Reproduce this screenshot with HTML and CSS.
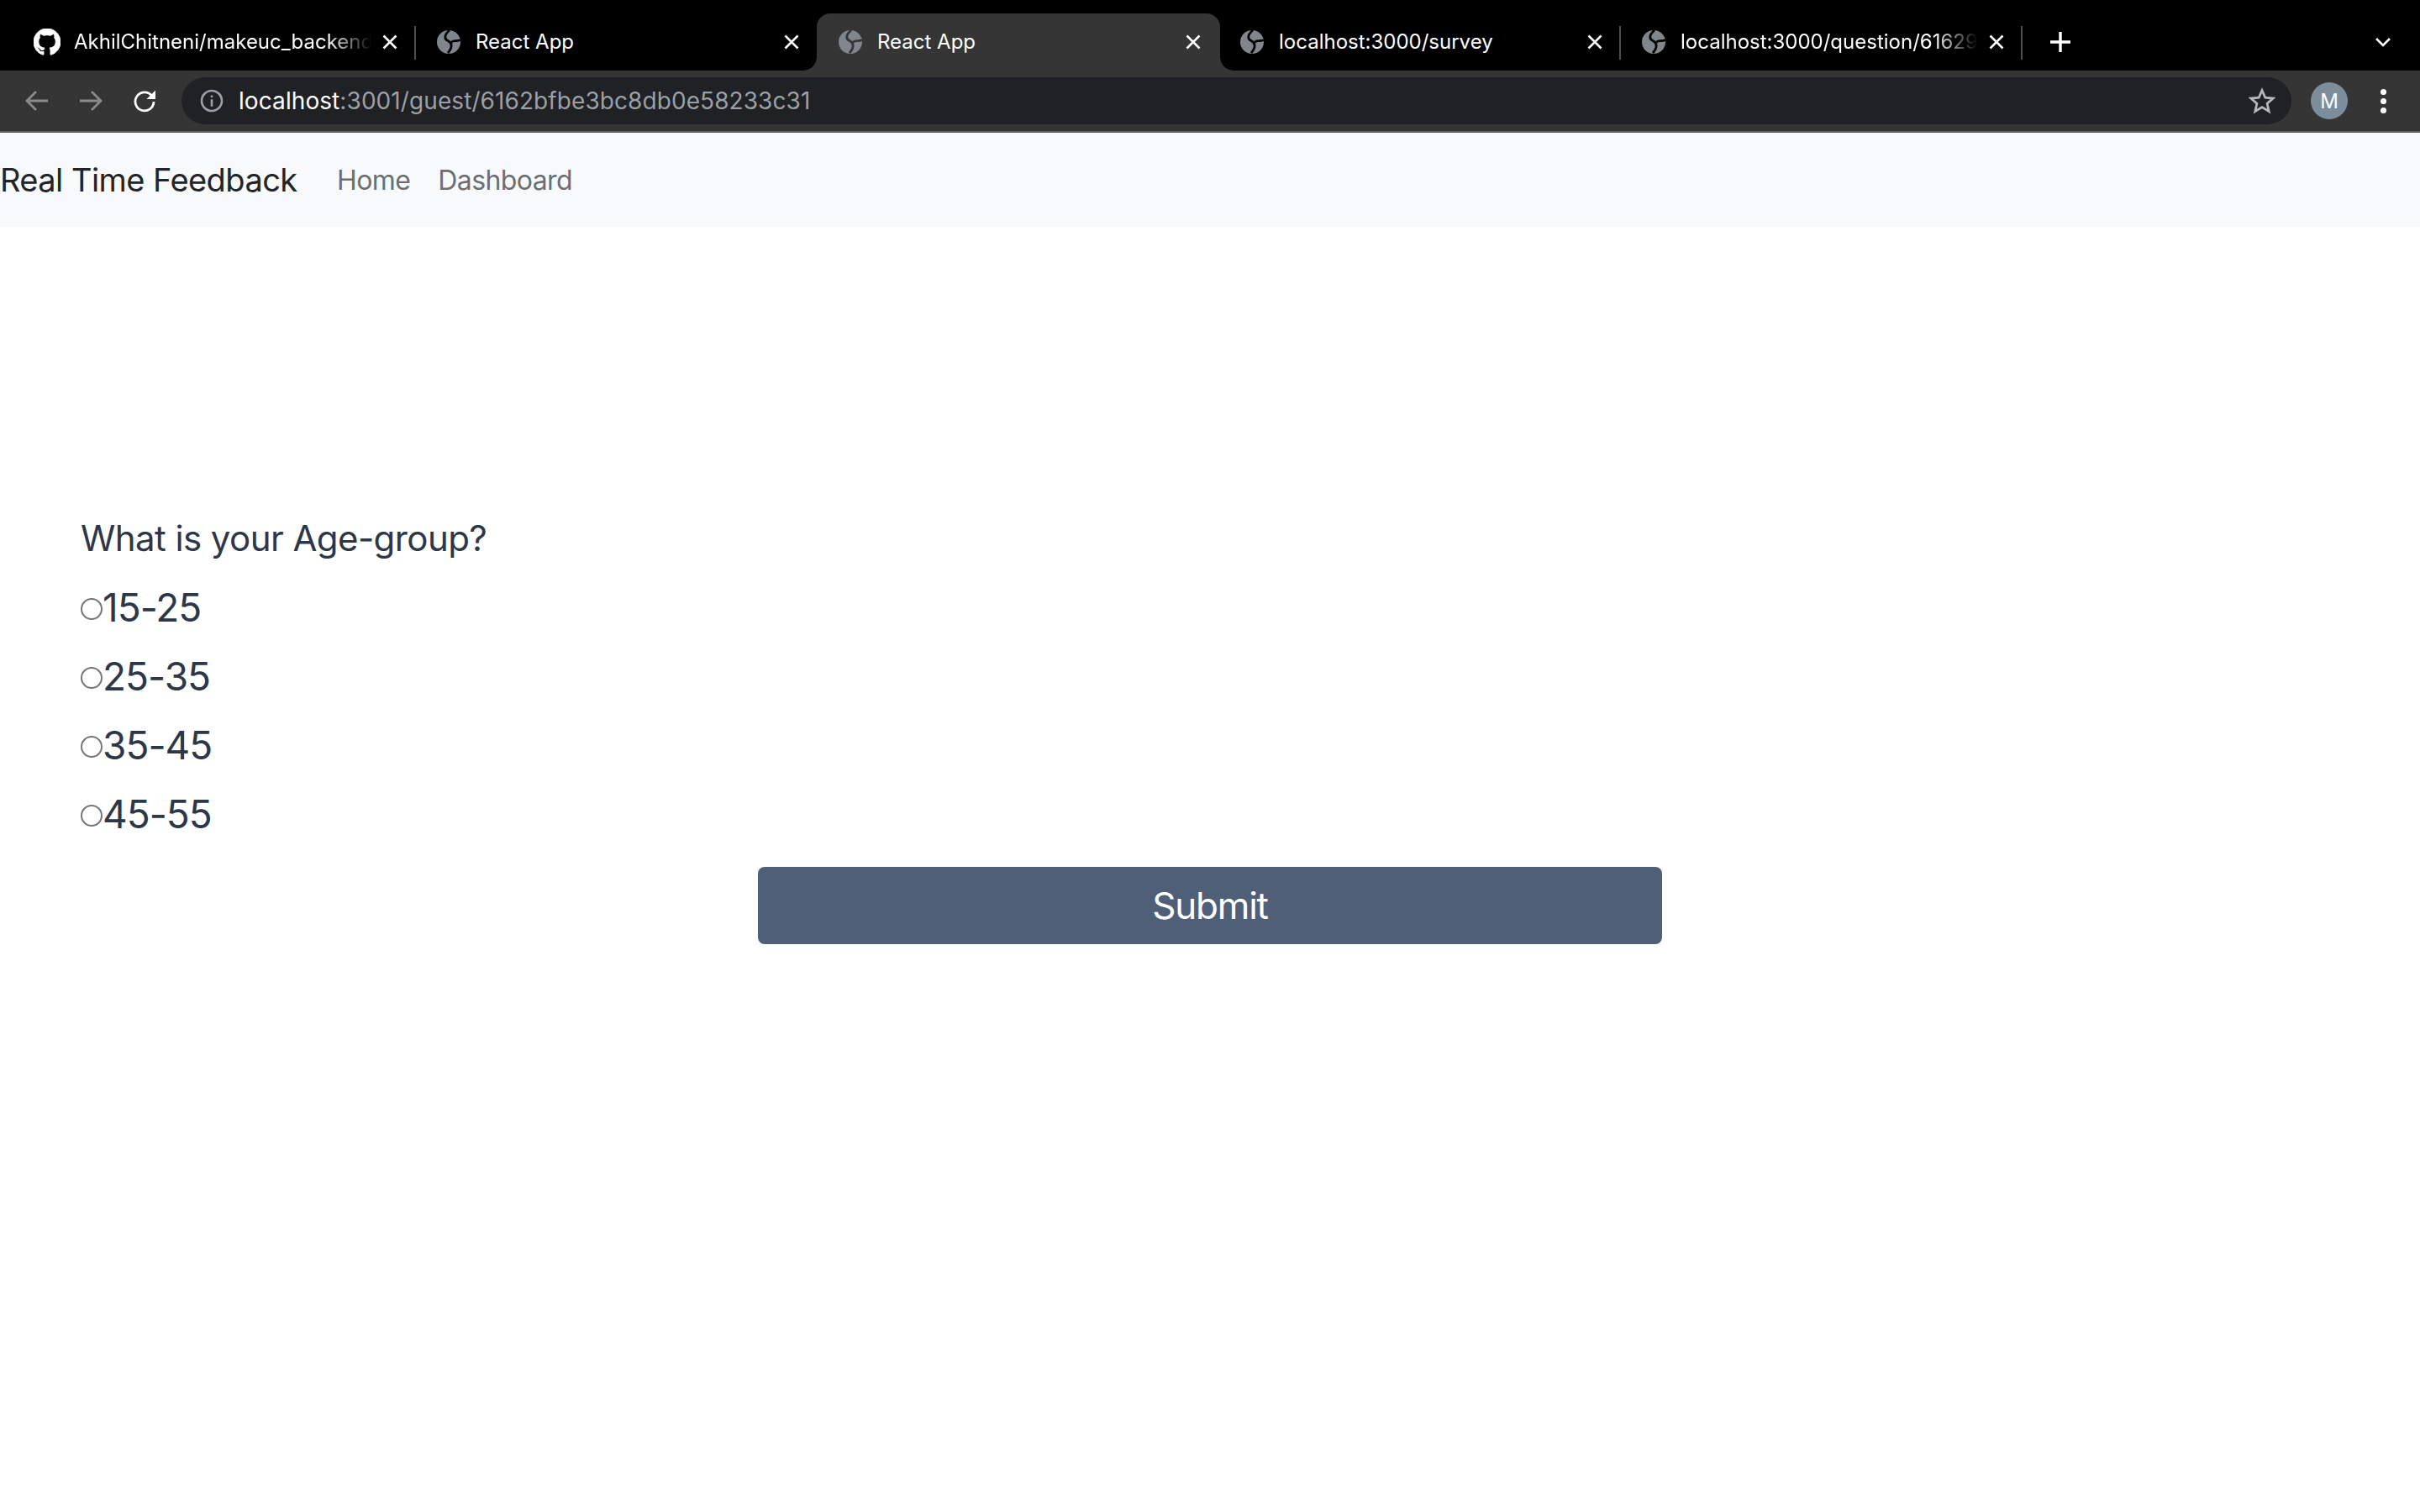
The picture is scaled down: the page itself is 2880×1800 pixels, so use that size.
FILE: index.html
```html
<!DOCTYPE html>
<html>
<head>
    <meta charset="utf-8" />
    <title>React App</title>
    <link rel="stylesheet" href="styles.css">
</head>
<body>
    <svg class="defs" width="0" height="0">
        <symbol id="globe" viewBox="0 0 28 28">
            <circle cx="14" cy="14" r="14" fill="#80868b" stroke="none" />
            <path d="M15 0C9 5 8 10 13 12.500C18 15 19 20 13 27" fill="none" stroke-width="2.800" />
            <path d="M17 14.500C20 11 23 14 28 11.500" fill="none" stroke-width="2.800" />
        </symbol>
        <symbol id="close" viewBox="0 0 24 24">
            <path d="M4.500 4.500L19.500 19.500M19.500 4.500L4.500 19.500" fill="none" stroke="#fff" stroke-width="2.600" />
        </symbol>
    </svg>

    <div class="tabstrip">
        <div class="tab sep">
            <svg class="favicon" viewBox="0 0 16 16"><path fill="#fff" stroke="#fff" stroke-width="0.500" fill-rule="evenodd" d="M8 0C3.580 0 0 3.580 0 8c0 3.540 2.290 6.530 5.470 7.590.400.070.550-.170.550-.380 0-.190-.010-.820-.010-1.490-2.010.370-2.530-.490-2.690-.940-.090-.230-.480-.940-.820-1.130-.280-.150-.680-.520-.010-.530.630-.010 1.080.580 1.230.820.720 1.210 1.870.870 2.330.660.070-.520.280-.870.510-1.070-1.780-.200-3.640-.890-3.640-3.950 0-.870.310-1.590.820-2.150-.080-.200-.360-1.020.080-2.120 0 0 .670-.210 2.200.820.640-.180 1.320-.270 2-.270.680 0 1.360.090 2 .270 1.530-1.040 2.200-.820 2.200-.820.440 1.100.160 1.920.080 2.120.510.560.820 1.270.820 2.150 0 3.070-1.870 3.750-3.650 3.950.290.250.540.730.540 1.480 0 1.070-.010 1.930-.010 2.200 0 .210.150.460.550.380A8.013 8.013 0 0016 8c0-4.420-3.580-8-8-8z"/></svg>
            <span class="title fade">AkhilChitneni/makeuc_backend</span>
            <svg class="close"><use href="#close" /></svg>
        </div>
        <div class="tab">
            <svg class="favicon globe"><use href="#globe" /></svg>
            <span class="title">React App</span>
            <svg class="close"><use href="#close" /></svg>
        </div>
        <div class="tab active">
            <svg class="favicon globe"><use href="#globe" /></svg>
            <span class="title">React App</span>
            <svg class="close"><use href="#close" /></svg>
        </div>
        <div class="tab sep">
            <svg class="favicon globe"><use href="#globe" /></svg>
            <span class="title">localhost:3000/survey</span>
            <svg class="close"><use href="#close" /></svg>
        </div>
        <div class="tab sep">
            <svg class="favicon globe"><use href="#globe" /></svg>
            <span class="title fade">localhost:3000/question/61629a1b</span>
            <svg class="close"><use href="#close" /></svg>
        </div>
        <svg class="newtab" viewBox="0 0 26 26"><path d="M13 1V25M1 13H25" fill="none" stroke="#fff" stroke-width="3.400" /></svg>
        <svg class="tablist" viewBox="0 0 20 12"><path d="M2 2L10 10L18 2" fill="none" stroke="#fff" stroke-width="2.600" /></svg>
    </div>

    <div class="toolbar">
        <span class="tool"><svg viewBox="0 0 28 26"><path d="M27 13H3M13 2L2 13L13 24" fill="none" stroke="#8a8b8d" stroke-width="2.800" /></svg></span>
        <span class="tool"><svg viewBox="0 0 28 26"><path d="M1 13H25M15 2L26 13L15 24" fill="none" stroke="#8a8b8d" stroke-width="2.800" /></svg></span>
        <span class="tool"><svg viewBox="0 0 28 28"><path d="M23 8.500A11 11 0 1 0 25 15" fill="none" stroke="#fff" stroke-width="2.800" /><path d="M27 1.500V12H16.500Z" fill="#fff" /></svg></span>
        <div class="omnibox">
            <svg class="info" viewBox="0 0 28 28"><circle cx="14" cy="14" r="12" fill="none" stroke="#9aa0a6" stroke-width="2.600" /><path d="M12.700 7.500h2.600v2.600h-2.600zM12.700 12.300h2.600v8.400h-2.600z" fill="#9aa0a6" /></svg>
            <span class="url"><b>localhost</b>:3001/guest/6162bfbe3bc8db0e58233c31</span>
            <svg class="star" viewBox="0 0 32 32"><path d="M16 3.500L19.800 12.200L29.200 13L22.100 19.200L24.200 28.500L16 23.600L7.800 28.500L9.900 19.200L2.800 13L12.200 12.200Z" fill="none" stroke="#b4b7b9" stroke-width="2.800" /></svg>
        </div>
        <span class="avatar">M</span>
        <span class="tool menu"><i></i><i></i><i></i></span>
    </div>

    <nav class="navbar">
        <a class="brand">Real Time Feedback</a>
        <a class="nav_link">Home</a>
        <a class="nav_link">Dashboard</a>
    </nav>

    <div class="main_bd">
        <form class="survey">
            <p class="question">What is your Age-group?</p>
            <label class="option"><input type="radio" name="age" />15-25</label>
            <label class="option"><input type="radio" name="age" />25-35</label>
            <label class="option"><input type="radio" name="age" />35-45</label>
            <label class="option"><input type="radio" name="age" />45-55</label>
            <button type="button" class="btn_submit">Submit</button>
        </form>
    </div>
</body>
</html>
```

FILE: styles.css
```css
* { box-sizing: border-box; }
html, body { margin: 0; padding: 0; background: #fff; font-family: Inter, "Liberation Sans", sans-serif; }
.defs { display: block; height: 0; }

.tabstrip { display: flex; height: 84px; padding-left: 16px; background: #000; color: #fff; align-items: flex-start; }
.tab { display: flex; position: relative; width: 478px; height: 68px; margin-top: 16px; padding: 0 18px 0 26px; align-items: center; stroke: #000; }
.tab.active { width: 480px; margin-right: -2px; padding-right: 20px; background: #353535; border-radius: 16px 16px 0 0; stroke: #353535; }
.tab.active::before, .tab.active::after { content: ""; position: absolute; bottom: 0; width: 16px; height: 16px; }
.tab.active::before { left: -16px; background: radial-gradient(circle at 0 0, #000 15.500px, #353535 16px); }
.tab.active::after { right: -16px; background: radial-gradient(circle at 100% 0, #000 15.500px, #353535 16px); }
.tab.sep::after { content: ""; position: absolute; right: -1px; top: 15px; width: 2px; height: 40px; background: #4f4f4f; }
.favicon { flex: none; width: 28px; height: 28px; margin-right: 18px; }
.tab:first-child .favicon { width: 32px; height: 32px; margin-left: -2px; margin-right: 16px; }
.title { flex: 1; overflow: hidden; white-space: nowrap; font-size: 24px; line-height: 32px; }
.title.fade { -webkit-mask-image: linear-gradient(to right, #000 85%, transparent 100%); mask-image: linear-gradient(to right, #000 85%, transparent 100%); }
.close { flex: none; width: 24px; height: 24px; margin-left: 10px; }
.newtab { flex: none; width: 26px; height: 26px; margin: 37px 0 0 33px; }
.tablist { flex: none; width: 20px; height: 12px; margin: 44px 34px 0 auto; }

.toolbar { display: flex; height: 74px; padding: 0 12px; background: #353535; border-bottom: 2px solid #5c5c5c; align-items: center; }
.tool { display: flex; flex: none; width: 64px; height: 56px; align-items: center; justify-content: center; }
.tool svg { width: 28px; height: 28px; }
.omnibox { display: flex; flex: 1; height: 56px; margin-left: 12px; padding: 0 19px 0 22px; background: #202124; border-radius: 28px; align-items: center; }
.info { flex: none; width: 28px; height: 28px; margin-right: 18px; }
.url { flex: 1; color: #9aa0a6; font-size: 28px; letter-spacing: 0.080px; white-space: nowrap; }
.url b { color: #fff; font-weight: 400; }
.star { flex: none; width: 32px; height: 32px; }
.avatar { display: flex; flex: none; width: 44px; height: 44px; margin-left: 23px; background: #7c8e9c; border-radius: 50%; color: #fff; font-size: 24px; align-items: center; justify-content: center; }
.menu { flex-direction: column; gap: 4px; margin-left: 10px; }
.menu i { display: block; width: 7px; height: 7px; background: #fff; border-radius: 50%; }

.navbar { display: flex; height: 112px; background: #f8f9fa; align-items: center; }
.brand { width: 352px; margin-right: 32px; color: #212529; font-size: 38px; letter-spacing: -0.550px; white-space: nowrap; }
.nav_link { padding: 0 16px 0 17px; color: #6c6f72; font-size: 32px; letter-spacing: -0.600px; }

.main_bd { padding: 330px 0 0; }
.survey { display: flex; flex-direction: column; padding: 0 96px; color: #2d3748; }
.question { margin: 0; font-size: 42px; line-height: 82px; letter-spacing: -0.580px; }
.option { display: flex; font-size: 46px; line-height: 82px; letter-spacing: -1px; align-items: center; }
.option input { flex: none; appearance: none; width: 26px; height: 26px; margin: 3px 0 0; background: #fff; border: 2px solid #767676; border-radius: 50%; }
.btn_submit { display: block; width: 1076px; height: 92px; margin: 22px 0 0 806px; background: #505f78; border: 0; border-radius: 8px; color: #fff; font-family: inherit; font-size: 44px; letter-spacing: -1.200px; }
```
